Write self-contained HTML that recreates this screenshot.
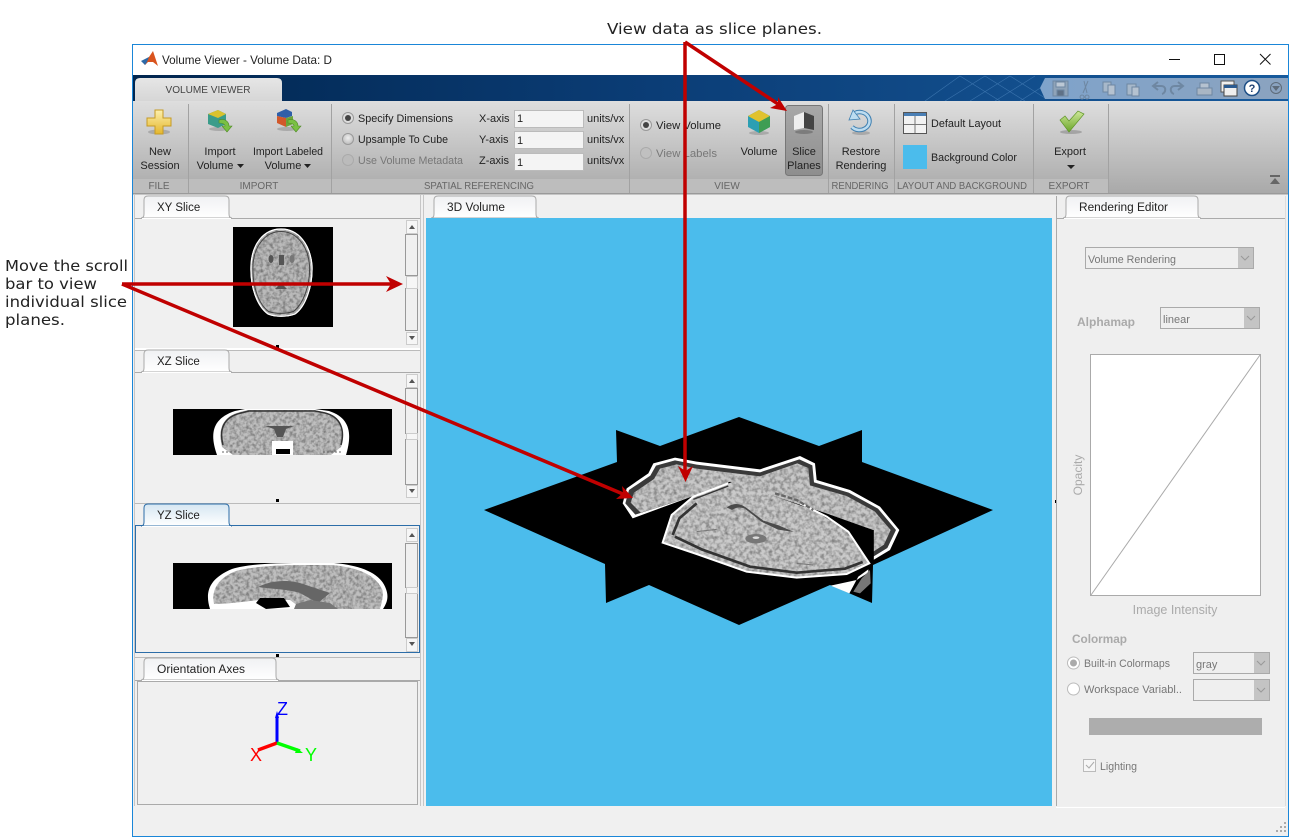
<!DOCTYPE html>
<html><head><meta charset="utf-8"><style>
html,body{margin:0;padding:0;background:#fff;width:1289px;height:837px;overflow:hidden}
svg{display:block}
text{font-family:"Liberation Sans",sans-serif;font-size:11px;fill:#222}
.a{font-family:"DejaVu Sans",sans-serif;font-size:15.5px;fill:#222}
.m{text-anchor:middle}
.l{font-size:10px;fill:#666;text-anchor:middle}
.d{fill:#777}
.g{fill:#888}
</style></head><body>
<svg width="1289" height="837" viewBox="0 0 1289 837" xmlns="http://www.w3.org/2000/svg">
<defs>
<linearGradient id="band" x1="0" x2="1" y1="0" y2="0"><stop offset="0" stop-color="#01264f"/><stop offset=".45" stop-color="#0b3d76"/><stop offset="1" stop-color="#175a9c"/></linearGradient>
<linearGradient id="rib" x1="0" x2="0" y1="0" y2="1"><stop offset="0" stop-color="#dedede"/><stop offset="1" stop-color="#a9a9a9"/></linearGradient>
<linearGradient id="tab" x1="0" x2="0" y1="0" y2="1"><stop offset="0" stop-color="#e6e6e6"/><stop offset="1" stop-color="#d6d6d6"/></linearGradient>
<linearGradient id="ptab" x1="0" x2="0" y1="0" y2="1"><stop offset="0" stop-color="#f0f1f3"/><stop offset="1" stop-color="#fff"/></linearGradient>
<linearGradient id="stab" x1="0" x2="0" y1="0" y2="1"><stop offset="0" stop-color="#d5e6f2"/><stop offset="1" stop-color="#fff"/></linearGradient>
<linearGradient id="sel" x1="0" x2="0" y1="0" y2="1"><stop offset="0" stop-color="#a8a8a8"/><stop offset="1" stop-color="#8e8e8e"/></linearGradient>
<linearGradient id="gold" x1="0" x2="0" y1="0" y2="1"><stop offset="0" stop-color="#fdf0ae"/><stop offset="1" stop-color="#e5b62c"/></linearGradient>
<linearGradient id="chk" x1="0" x2="0" y1="0" y2="1"><stop offset="0" stop-color="#cfe89a"/><stop offset="1" stop-color="#6aa52a"/></linearGradient>
<linearGradient id="qat" x1="0" x2="1" y1="0" y2="0"><stop offset="0" stop-color="#7fa3cb"/><stop offset="1" stop-color="#8ba3bf"/></linearGradient>
<filter id="tex" x="0" y="0" width="100%" height="100%"><feTurbulence type="fractalNoise" baseFrequency=".3" numOctaves="2" seed="4"/><feColorMatrix values="0 0 0 0 0  0 0 0 0 0  0 0 0 0 0  .8 0 0 0 -.3"/><feComposite in2="SourceGraphic" operator="in"/></filter>
<filter id="tex3" x="0" y="0" width="100%" height="100%"><feTurbulence type="fractalNoise" baseFrequency=".09" numOctaves="2" seed="7"/><feColorMatrix values="0 0 0 0 0  0 0 0 0 0  0 0 0 0 0  .8 0 0 0 -.3"/><feComposite in2="SourceGraphic" operator="in"/></filter>
<radialGradient id="rad" cx=".5" cy=".4" r=".6"><stop offset="0" stop-color="#eee"/><stop offset="1" stop-color="#bbb"/></radialGradient>
</defs>

<!-- window -->
<rect x="132.500" y="44.500" width="1156" height="792" fill="#f0f0f0" stroke="#1a86d8"/>
<rect x="133" y="45" width="1155" height="30" fill="#fff"/>
<polygon points="142,61 149,57 153,51 158,66 153,62 148,62 145,65" fill="#d9541e"/>
<polygon points="141,61 149,57 147,62 145,65" fill="#2d6aa8"/>
<text x="162" y="64" style="font-size:12px" textLength="170" lengthAdjust="spacingAndGlyphs">Volume Viewer - Volume Data: D</text>
<path d="M1169 59.500H1180" stroke="#111" fill="none"/>
<rect x="1214.500" y="54.500" width="10" height="10" fill="none" stroke="#111"/>
<path d="M1260 54L1270.500 64.500M1270.500 54L1260 64.500" stroke="#111" fill="none"/>

<!-- blue band -->
<rect x="133" y="75" width="1155" height="26" fill="url(#band)"/>
<path d="M925 101L960 76M945 101L985 76M970 101L1010 76M995 101L1035 76M1020 101L1045 85M960 76L1000 101M985 76L1025 101M1010 76L1045 98" stroke="#3a73ad" stroke-width=".6" fill="none"/>
<polygon points="1040,88 1045,78 1288,78 1288,99 1045,99" fill="url(#qat)"/>
<!-- qat icons -->
<g fill="#a7b8ca" stroke="#6e87a2">
<path d="M1053 81h15v15h-15z" fill="#8fa3b8"/><rect x="1056" y="82" width="9" height="5" fill="#bcc8d5"/><rect x="1057" y="90" width="7" height="6" fill="#5f7186"/>
<path d="M1082 95a2 2 0 1 0 .1 0M1087 95a2 2 0 1 0 .1 0M1083 93L1088 81M1087 93L1084 81" fill="none"/>
<rect x="1103" y="82" width="8" height="10"/><rect x="1108" y="85" width="7" height="10" fill="#b5c2d0"/>
<rect x="1127" y="84" width="9" height="11"/><rect x="1132" y="87" width="7" height="9" fill="#b5c2d0"/>
<path d="M1162 94c4-1 5-8-1-8h-7M1158 82l-5 4 5 4" fill="none" stroke-width="2"/>
<path d="M1174 94c-4-1-5-8 1-8h7M1178 82l5 4-5 4" fill="none" stroke-width="2"/>
<rect x="1197" y="88" width="15" height="7" fill="#a9b6c4"/><rect x="1200" y="83" width="9" height="5" fill="#b5c2d0"/>
</g>
<rect x="1221" y="81" width="13" height="11" fill="#eee" stroke="#555"/><rect x="1224" y="85" width="13" height="11" fill="#eee" stroke="#444"/><rect x="1224" y="85" width="13" height="3" fill="#2a5a90"/>
<circle cx="1252" cy="88" r="7.500" fill="#fff" stroke="#1e4f86" stroke-width="1.500"/>
<text x="1252" y="92" class="m" style="font-size:11px;font-weight:bold;fill:#1e3f6f">?</text>
<circle cx="1276" cy="88" r="5.500" fill="none" stroke="#5d6b7a"/><polygon points="1272,86 1280,86 1276,91" fill="#5d6b7a"/>

<!-- ribbon -->
<rect x="133" y="101" width="1155" height="92" fill="url(#rib)"/>
<rect x="133" y="179" width="975" height="14" fill="#bdbdbd"/>
<path d="M135 101V83q0-5 5-5H277q5 0 5 5V101z" fill="url(#tab)"/>
<text x="208" y="93" class="m" style="font-size:10.500px;fill:#444" textLength="85" lengthAdjust="spacingAndGlyphs">VOLUME VIEWER</text>
<path d="M188.500 104V193M331.500 104V193M629.500 104V193M828.500 104V193M894.500 104V193M1033.500 104V193M1108.500 104V193" stroke="#a2a2a2"/>
<rect x="133" y="193" width="1155" height="1.500" fill="#9a9a9a"/>
<text x="159" y="189" class="l">FILE</text><text x="259" y="189" class="l">IMPORT</text><text x="479" y="189" class="l" textLength="110" lengthAdjust="spacingAndGlyphs">SPATIAL REFERENCING</text><text x="727" y="189" class="l">VIEW</text><text x="860" y="189" class="l" textLength="57" lengthAdjust="spacingAndGlyphs">RENDERING</text><text x="962" y="189" class="l" textLength="130" lengthAdjust="spacingAndGlyphs">LAYOUT AND BACKGROUND</text><text x="1069" y="189" class="l">EXPORT</text>

<!-- new session -->
<ellipse cx="159" cy="132" rx="11" ry="2.500" fill="#888" opacity=".5"/>
<path d="M155 110h8v8h8v8h-8v8h-8v-8h-8v-8h8z" fill="url(#gold)" stroke="#c59a24"/>
<text x="160" y="155" class="m">New</text><text x="160" y="169" class="m">Session</text>
<!-- import vol -->
<ellipse cx="219" cy="129" rx="10" ry="2" fill="#888" opacity=".5"/>
<polygon points="208,114 218,110 226,114 226,124 218,128 208,124" fill="#3a9c8a"/><polygon points="208,114 218,110 226,114 218,118" fill="#d9c22e"/>
<path d="M219 120c6-2 10 2 10 6h3l-5 6-5-6h3c0-2-3-3-6-3z" fill="#7ac043" stroke="#4f8a25" stroke-width=".6"/>
<text x="220" y="155" class="m">Import</text><text x="215" y="169" class="m">Volume</text><polygon points="237,164 244,164 240.500,168" fill="#222"/>
<!-- labeled -->
<ellipse cx="287" cy="129" rx="10" ry="2" fill="#888" opacity=".5"/>
<polygon points="277,113 286,109 292,112 292,116 286,118 277,116" fill="#2f5fa8"/><polygon points="277,116 286,118 286,127 277,123" fill="#d2582a"/><polygon points="286,118 293,116 293,124 286,127" fill="#6da53a"/>
<path d="M288 120c6-2 10 2 10 6h3l-5 6-5-6h3c0-2-3-3-6-3z" fill="#7ac043" stroke="#4f8a25" stroke-width=".6"/>
<text x="288" y="155" class="m" textLength="70" lengthAdjust="spacingAndGlyphs">Import Labeled</text><text x="283" y="169" class="m">Volume</text><polygon points="304,164 311,164 307.500,168" fill="#222"/>
<!-- spatial -->
<circle cx="348" cy="118" r="5.500" fill="#ddd" stroke="#999"/><circle cx="348" cy="118" r="3" fill="#444"/>
<circle cx="348" cy="139" r="5.500" fill="url(#rad)" stroke="#999"/>
<circle cx="348" cy="160" r="5.500" fill="#bbb" stroke="#aaa"/>
<text x="358" y="122" textLength="95" lengthAdjust="spacingAndGlyphs">Specify Dimensions</text><text x="358" y="143" textLength="90" lengthAdjust="spacingAndGlyphs">Upsample To Cube</text><text x="358" y="164" class="d" textLength="105" lengthAdjust="spacingAndGlyphs">Use Volume Metadata</text>
<text x="479" y="122">X-axis</text><text x="479" y="143">Y-axis</text><text x="479" y="164">Z-axis</text>
<rect x="514.500" y="110.500" width="69" height="17" fill="#f4f4f4" stroke="#bbb"/><rect x="514.500" y="131.500" width="69" height="17" fill="#f4f4f4" stroke="#bbb"/><rect x="514.500" y="153.500" width="69" height="17" fill="#f4f4f4" stroke="#bbb"/>
<text x="517" y="122">1</text><text x="517" y="144">1</text><text x="517" y="166">1</text>
<text x="587" y="122">units/vx</text><text x="587" y="143">units/vx</text><text x="587" y="164">units/vx</text>
<!-- view -->
<circle cx="646" cy="125" r="5.500" fill="#ddd" stroke="#999"/><circle cx="646" cy="125" r="3" fill="#444"/>
<circle cx="646" cy="153" r="5.500" fill="#c0c0c0" stroke="#aaa"/>
<text x="656" y="129" textLength="65" lengthAdjust="spacingAndGlyphs">View Volume</text><text x="656" y="157" class="d" textLength="61" lengthAdjust="spacingAndGlyphs">View Labels</text>
<ellipse cx="759" cy="133" rx="10" ry="2" fill="#888" opacity=".5"/>
<polygon points="748,116 759,110 770,116 770,127 759,133 748,127" fill="#2c9fb3"/><polygon points="748,116 759,110 770,116 759,122" fill="#e0c22e"/><polygon points="759,122 770,116 770,127 759,133" fill="#3f9d54"/>
<text x="759" y="155" class="m">Volume</text>
<rect x="785.500" y="105.500" width="37" height="70" rx="3" fill="url(#sel)" stroke="#777"/>
<ellipse cx="804" cy="132" rx="9" ry="2" fill="#666" opacity=".6"/>
<polygon points="794,116 804,112 804,128 794,130" fill="#eee"/><polygon points="804,112 814,116 814,130 804,128" fill="#444"/>
<text x="804" y="155" class="m">Slice</text><text x="804" y="169" class="m">Planes</text>
<!-- restore -->
<ellipse cx="861" cy="133" rx="9" ry="2" fill="#888" opacity=".5"/>
<path d="M855 113a10 9 0 1 1-3 14" fill="none" stroke="#3f7fb0" stroke-width="4.500"/><path d="M855 113a10 9 0 1 1-3 14" fill="none" stroke="#bcdcf0" stroke-width="2.500"/><polygon points="849,120 860,119 853,110" fill="#bcdcf0" stroke="#3f7fb0" stroke-width=".8"/>
<text x="861" y="155" class="m">Restore</text><text x="861" y="169" class="m">Rendering</text>
<!-- layout -->
<rect x="903.500" y="112.500" width="23" height="21" fill="#f2f2f2" stroke="#555"/><rect x="904" y="113" width="22" height="3" fill="#4a7fb5"/><path d="M915 116V133M904 124.500H926" stroke="#777" fill="none"/>
<text x="931" y="127" textLength="70" lengthAdjust="spacingAndGlyphs">Default Layout</text>
<rect x="903" y="145" width="24" height="24" fill="#4bbcec"/>
<text x="931" y="161" textLength="86" lengthAdjust="spacingAndGlyphs">Background Color</text>
<!-- export -->
<ellipse cx="1071" cy="132" rx="11" ry="2" fill="#888" opacity=".6"/>
<path d="M1060 120l5-4 4 5 9-10 6 3-15 18z" fill="url(#chk)" stroke="#5f9528" stroke-width=".7"/>
<text x="1070" y="155" class="m">Export</text><polygon points="1067,165 1075,165 1071,169" fill="#222"/>
<rect x="1270" y="175" width="10" height="2" fill="#666"/><polygon points="1270,184 1280,184 1275,178" fill="#666"/>

<!-- left pane -->
<rect x="134" y="195" width="287" height="611" fill="#f0f0f0"/>
<path d="M134.500 195V806M420.500 195V806" stroke="#c6c6c6" fill="none"/>
<path d="M135 218.500H420" stroke="#aaa"/>
<path d="M141 218q3 0 3-4v-14q0-4 4-4h77q4 0 4 4v14q0 4 3 4z" fill="url(#ptab)" stroke="#aaa"/><path d="M142 218.500H231" stroke="#fff"/>
<text x="157" y="211" style="font-size:11.500px">XY Slice</text>
<path d="M135 348.500H420M135 349.500H420" stroke="#fff"/><path d="M135 350.500H420" stroke="#bbb"/>
<path d="M135 372.500H420" stroke="#aaa"/>
<path d="M141 372q3 0 3-4v-14q0-4 4-4h77q4 0 4 4v14q0 4 3 4z" fill="url(#ptab)" stroke="#aaa"/><path d="M142 372.500H231" stroke="#fff"/>
<text x="157" y="365" style="font-size:11.500px">XZ Slice</text>
<path d="M135 503.500H420" stroke="#bbb"/>
<rect x="135.500" y="525.500" width="284" height="127" fill="#f0f0f0" stroke="#2c6da8"/>
<path d="M141 526q3 0 3-4v-14q0-4 4-4h77q4 0 4 4v14q0 4 3 4z" fill="url(#stab)" stroke="#2c6da8"/><path d="M142 526.500H231" stroke="#fff"/>
<text x="157" y="519" style="font-size:11.500px">YZ Slice</text>
<path d="M135 657.500H420" stroke="#bbb"/>
<path d="M135 680.500H420" stroke="#aaa"/>
<path d="M141 680q3 0 3-4v-14q0-4 4-4h124q4 0 4 4v14q0 4 3 4z" fill="url(#ptab)" stroke="#aaa"/><path d="M142 680.500H278" stroke="#fff"/>
<text x="157" y="673" style="font-size:11.500px" textLength="88" lengthAdjust="spacingAndGlyphs">Orientation Axes</text>
<rect x="137.500" y="681.500" width="280" height="123" fill="#f0f0f0" stroke="#aaa"/>
<rect x="276" y="345" width="3" height="3"/><rect x="276" y="499" width="3" height="3"/><rect x="276" y="654" width="3" height="3"/><rect x="1053" y="500" width="3" height="3"/>

<!-- scrollbars -->
<g fill="#f0f0f0" stroke="#999">
<rect x="405.500" y="234.500" width="12" height="41"/><rect x="405.500" y="288.500" width="12" height="42"/>
<rect x="405.500" y="388.500" width="12" height="45"/><rect x="405.500" y="439.500" width="12" height="45"/>
<rect x="405.500" y="543.500" width="12" height="44"/><rect x="405.500" y="593.500" width="12" height="44"/>
</g>
<g fill="#f6f6f6" stroke="#ccc">
<rect x="406.500" y="220.500" width="11" height="13"/><rect x="406.500" y="276.500" width="11" height="12"/><rect x="406.500" y="332.500" width="11" height="12"/>
<rect x="406.500" y="374.500" width="11" height="13"/><rect x="406.500" y="433.500" width="11" height="6"/><rect x="406.500" y="485.500" width="11" height="12"/>
<rect x="406.500" y="528.500" width="11" height="13"/><rect x="406.500" y="587.500" width="11" height="6"/><rect x="406.500" y="638.500" width="11" height="13"/>
</g>
<g fill="#555">
<polygon points="409,229 415,229 412,225"/><polygon points="409,336 415,336 412,340"/>
<polygon points="409,383 415,383 412,379"/><polygon points="409,489 415,489 412,493"/>
<polygon points="409,537 415,537 412,533"/><polygon points="409,642 415,642 412,646"/>
</g>

<!-- slices -->
<rect x="233" y="227" width="100" height="100" fill="#000"/>
<path d="M281 229c18 0 29 16 31 36 1 22-7 42-17 49-8 3-20 3-27 0-11-8-18-27-17-49 1-20 12-36 30-36z" fill="#bababa" stroke="#fff" stroke-width="1"/>
<path d="M281 229c18 0 29 16 31 36 1 22-7 42-17 49-8 3-20 3-27 0-11-8-18-27-17-49 1-20 12-36 30-36z" fill="#000" filter="url(#tex)"/>
<path d="M281 231.500c16 0 27 15 28.500 33.500 1 21-6.500 39-16 46.500-8 2.500-18 2.500-25 0-10-7.500-16.500-25.500-15.500-46.500 1-18.500 12-33.500 28-33.500z" fill="none" stroke="#444"/>
<path d="M281 229c18 0 29 16 31 36 1 22-7 42-17 49-8 3-20 3-27 0-11-8-18-27-17-49 1-20 12-36 30-36z" fill="none" stroke="#fff" stroke-width="1.200"/>
<ellipse cx="271" cy="259" rx="2.500" ry="4" fill="#555"/><ellipse cx="292" cy="259" rx="2.500" ry="4" fill="#777"/><rect x="279" y="255" width="5" height="10" fill="#555"/><path d="M275 289l6-6 6 6z" fill="#555"/>

<rect x="173" y="409" width="219" height="46" fill="#000"/>
<path d="M217 455c-7-20-6-36 18-44l10-2h70l14 2c22 7 23 24 17 44z" fill="#fff"/>
<path d="M222 447c-4-16-1-30 18-35l8-2h66l10 2c18 5 22 19 17 35l-10 8h-98z" fill="#bfbfbf"/>
<path d="M222 447c-4-16-1-30 18-35l8-2h66l10 2c18 5 22 19 17 35l-10 8h-98z" fill="#000" filter="url(#tex)"/>
<path d="M223 445c-4-15 0-28 18-32l8-2h66l10 2c16 4 20 17 16 32" fill="none" stroke="#333" stroke-width="1.500"/>
<path d="M219 447l12 8h-14zM343 447l-12 8h14z" fill="#fff"/><path d="M222 452h18M323 452h18" stroke="#666" stroke-dasharray="2 2"/>
<rect x="272" y="441" width="21" height="14" fill="#fff"/><rect x="276" y="449" width="14" height="5" fill="#000"/>
<path d="M265 426h29l-8 3-3 8h-6l-3-8z" fill="#555"/>

<rect x="173" y="563" width="219" height="46" fill="#000"/>
<path d="M210 609c-5-16-2-30 22-40 16-5 42-6 68-6h34c22 2 46 8 52 26 3 8 1 14-3 20z" fill="#fff"/>
<path d="M214 604c-3-14 4-26 22-33 14-4 40-6 64-6h32c20 2 42 7 50 24 2 6 0 12-2 20h-166z" fill="#bebebe"/>
<path d="M214 604c-3-14 4-26 22-33 14-4 40-6 64-6h32c20 2 42 7 50 24 2 6 0 12-2 20h-166z" fill="#000" filter="url(#tex)"/>
<path d="M258 587c14-7 32-8 48-2l24 8-12 10-18-10c-14-4-28-4-42-6z" fill="#666"/>
<path d="M210 604c20 0 30-2 50-4l30 0 12 9h-92z" fill="#fff"/>
<path d="M260 598h24l6 9-24 2-10-6z" fill="#000"/>
<path d="M296 604l14-4 20 3 8 6h-44z" fill="#777"/>

<!-- axes -->
<path d="M277 743V716" stroke="#0000ff" stroke-width="3"/><polygon points="275,718 279,718 277,711" fill="#0000ff"/>
<path d="M277 743L258 750" stroke="#ff0000" stroke-width="3.500"/>
<path d="M277 743L300 751" stroke="#00ff00" stroke-width="3.500"/><polygon points="297,748 303,753 295,753" fill="#00ff00"/>
<text x="277" y="715" style="font-size:18px;fill:#0000ff">Z</text>
<text x="250" y="761" style="font-size:18px;fill:#ff0000">X</text>
<text x="305" y="761" style="font-size:18px;fill:#00ff00">Y</text>

<!-- center pane -->
<rect x="423" y="195" width="632" height="611" fill="#f0f0f0"/>
<path d="M423.500 195V806" stroke="#c6c6c6"/>
<path d="M426 218.500H1052" stroke="#aaa"/>
<path d="M431 218q3 0 3-4v-14q0-4 4-4h94q4 0 4 4v14q0 4 3 4z" fill="url(#ptab)" stroke="#aaa"/>
<text x="447" y="211" style="font-size:11.500px" textLength="58" lengthAdjust="spacingAndGlyphs">3D Volume</text>
<rect x="426" y="218" width="626" height="588" fill="#4bbcec"/>
<polygon points="484,510 617,462 616,430 660,446 739,417 819,446 862,430 862,462 993,510 873,565 872,603 830,585 739,625 649,585 606,603 605,564" fill="#000"/>
<g transform="translate(480 410) scale(.33333)">
<!-- back plane brain -->
<path d="M458 325L428 280 440 235 505 190 520 160 585 143 650 155 840 178 960 138 1005 160 1010 210 1110 240 1200 290 1258 360 1230 420 1180 450V360L1040 310 750 215 640 258z" fill="#fff"/>
<path d="M466 314L436 280 447 240 511 197 528 167 585 151 650 164 840 187 958 148 997 166 1002 217 1106 248 1194 296 1248 360 1222 414 1180 440V360L1040 310 750 215 640 258z" fill="#3a3a3a"/>
<path d="M482 308L452 278 462 248 522 207 540 176 590 163 650 176 840 199 952 160 985 174 990 226 1100 258 1184 304 1232 360 1212 404 1180 425V360L1040 310 750 215 640 258z" fill="#c8c8c8"/>
<path d="M482 308L452 278 462 248 522 207 540 176 590 163 650 176 840 199 952 160 985 174 990 226 1100 258 1184 304 1232 360 1212 404 1180 425V360L1040 310 750 215 640 258z" fill="#000" filter="url(#tex3)"/>
<!-- front plane brain -->
<path d="M548 398L575 315 640 260 760 215 1000 300 1105 365 1168 460 1100 492 950 503 800 485 650 432z" fill="#cacaca"/>
<path d="M548 398L575 315 640 260 760 215 1000 300 1105 365 1168 460 1100 492 950 503 800 485 650 432z" fill="#000" filter="url(#tex3)"/>
<path d="M578 375L598 325 650 280M585 380L665 418 810 470 950 488 1095 476 1148 456" fill="none" stroke="#333" stroke-width="8"/>
<path d="M650 432L548 398 575 315 640 260 745 220M650 432L800 485 950 503 1100 492 1168 460 1105 365 1040 320 960 280" fill="none" stroke="#fff" stroke-width="6"/>
<path d="M640 268L745 228" stroke="#333" stroke-width="4" fill="none"/>
<path d="M740 292c22-15 40-12 60 2l50 38 46 14 46 20-48-7-50-24-48-38c-15-8-30-4-40 3z" fill="#4a4a4a"/>
<ellipse cx="828" cy="386" rx="32" ry="14" fill="#777"/><ellipse cx="828" cy="383" rx="10" ry="4" fill="#ddd"/>
<path d="M885 250L950 270 1000 300" stroke="#666" stroke-width="7" fill="none" stroke-dasharray="14 6"/>
<path d="M650 365L710 358M950 460L1000 465" stroke="#777" stroke-width="3" fill="none"/>
<path d="M1052 527L1108 550 1135 500 1165 478 1165 488 1130 510z" fill="#fff"/>
<path d="M1120 545L1145 505 1170 480 1172 520 1140 550z" fill="#777"/>
<path d="M1172 465L1180 455V360" stroke="#000" stroke-width="3" fill="none"/>
</g>

<!-- right pane -->
<rect x="1056" y="195" width="229" height="611" fill="#efefef"/>
<path d="M1056.500 196V806" stroke="#aaa"/><path d="M1285.500 196V806" stroke="#ddd"/>
<path d="M1056 218.500H1285" stroke="#aaa"/>
<path d="M1063 218q3 0 3-4v-14q0-4 4-4h124q4 0 4 4v14q0 4 3 4z" fill="url(#ptab)" stroke="#aaa"/><path d="M1064 218.500H1200" stroke="#fff"/>
<text x="1079" y="211" style="font-size:11.500px" textLength="89" lengthAdjust="spacingAndGlyphs">Rendering Editor</text>
<path d="M1056 807.500H1285" stroke="#fff"/>
<g fill="#efefef" stroke="#aaa">
<rect x="1085.500" y="247.500" width="168" height="21"/><rect x="1160.500" y="307.500" width="99" height="21"/><rect x="1193.500" y="652.500" width="76" height="21"/><rect x="1193.500" y="679.500" width="76" height="21"/>
</g>
<g fill="#c4c4c4"><rect x="1238" y="248" width="15" height="20"/><rect x="1244" y="308" width="15" height="20"/><rect x="1254" y="653" width="15" height="20"/><rect x="1254" y="680" width="15" height="20"/></g>
<path d="M1241 256l4 4 4-4M1247 316l4 4 4-4M1257 661l4 4 4-4M1257 688l4 4 4-4" fill="none" stroke="#999"/>
<text x="1088" y="263" class="d" textLength="88" lengthAdjust="spacingAndGlyphs">Volume Rendering</text>
<text x="1163" y="323" class="d">linear</text>
<text x="1196" y="668" class="d">gray</text>
<text x="1077" y="326" style="font-size:12px;font-weight:bold;fill:#aaa">Alphamap</text>
<rect x="1090.500" y="354.500" width="170" height="241" fill="#fff" stroke="#aaa"/>
<path d="M1091 595L1260 355" stroke="#aaa" fill="none"/>
<text transform="translate(1082 475) rotate(-90)" class="m" style="font-size:12px;fill:#aaa">Opacity</text>
<text x="1175" y="614" class="m" style="font-size:12.500px;fill:#aaa">Image Intensity</text>
<text x="1072" y="643" style="font-size:12px;fill:#aaa;font-weight:bold" textLength="55" lengthAdjust="spacingAndGlyphs">Colormap</text>
<circle cx="1073.500" cy="663" r="6" fill="#fff" stroke="#bbb"/><circle cx="1073.500" cy="663" r="3.500" fill="#aaa"/>
<circle cx="1073.500" cy="689" r="6" fill="#fff" stroke="#bbb"/>
<text x="1084" y="667" class="d" textLength="86" lengthAdjust="spacingAndGlyphs">Built-in Colormaps</text>
<text x="1084" y="693" class="d" textLength="98" lengthAdjust="spacingAndGlyphs">Workspace Variabl..</text>
<rect x="1089" y="718" width="173" height="17" fill="#adadad"/>
<rect x="1083.500" y="759.500" width="12" height="12" fill="#f6f6f6" stroke="#bbb"/><path d="M1086 765l3 3 5-6" fill="none" stroke="#aaa"/>
<text x="1100" y="770" class="d" textLength="37" lengthAdjust="spacingAndGlyphs">Lighting</text>
<g fill="#aaa"><rect x="1284" y="826" width="2" height="2"/><rect x="1284" y="830" width="2" height="2"/><rect x="1280" y="830" width="2" height="2"/><rect x="1276" y="830" width="2" height="2"/><rect x="1280" y="826" width="2" height="2"/><rect x="1284" y="822" width="2" height="2"/></g>

<!-- annotations -->
<rect x="0" y="0" width="1289" height="44" fill="#fff"/>
<rect x="132" y="44" width="1157" height="1" fill="#1a86d8"/>
<g stroke="#c00000" stroke-width="3.500" fill="none">
<path d="M685 42V472M685 42L778 104M122 284H392M122 284L623 494"/>
</g>
<g fill="#c00000">
<polygon points="685.500,482 678,466 685.500,471 693,466"/>
<polygon points="787,111 770,108 778,104 778,97"/>
<polygon points="403,284 386,276 391,284 386,292"/>
<polygon points="633,498 616,499 623,493 622,486"/>
</g>
<text x="607" y="34" class="a" textLength="215" lengthAdjust="spacingAndGlyphs">View data as slice planes.</text>
<text x="5" y="271" class="a" textLength="123" lengthAdjust="spacingAndGlyphs">Move the scroll</text>
<text x="5" y="289" class="a" textLength="92" lengthAdjust="spacingAndGlyphs">bar to view</text>
<text x="5" y="307" class="a" textLength="122" lengthAdjust="spacingAndGlyphs">individual slice</text>
<text x="5" y="325" class="a" textLength="60" lengthAdjust="spacingAndGlyphs">planes.</text>
</svg>
</body></html>
